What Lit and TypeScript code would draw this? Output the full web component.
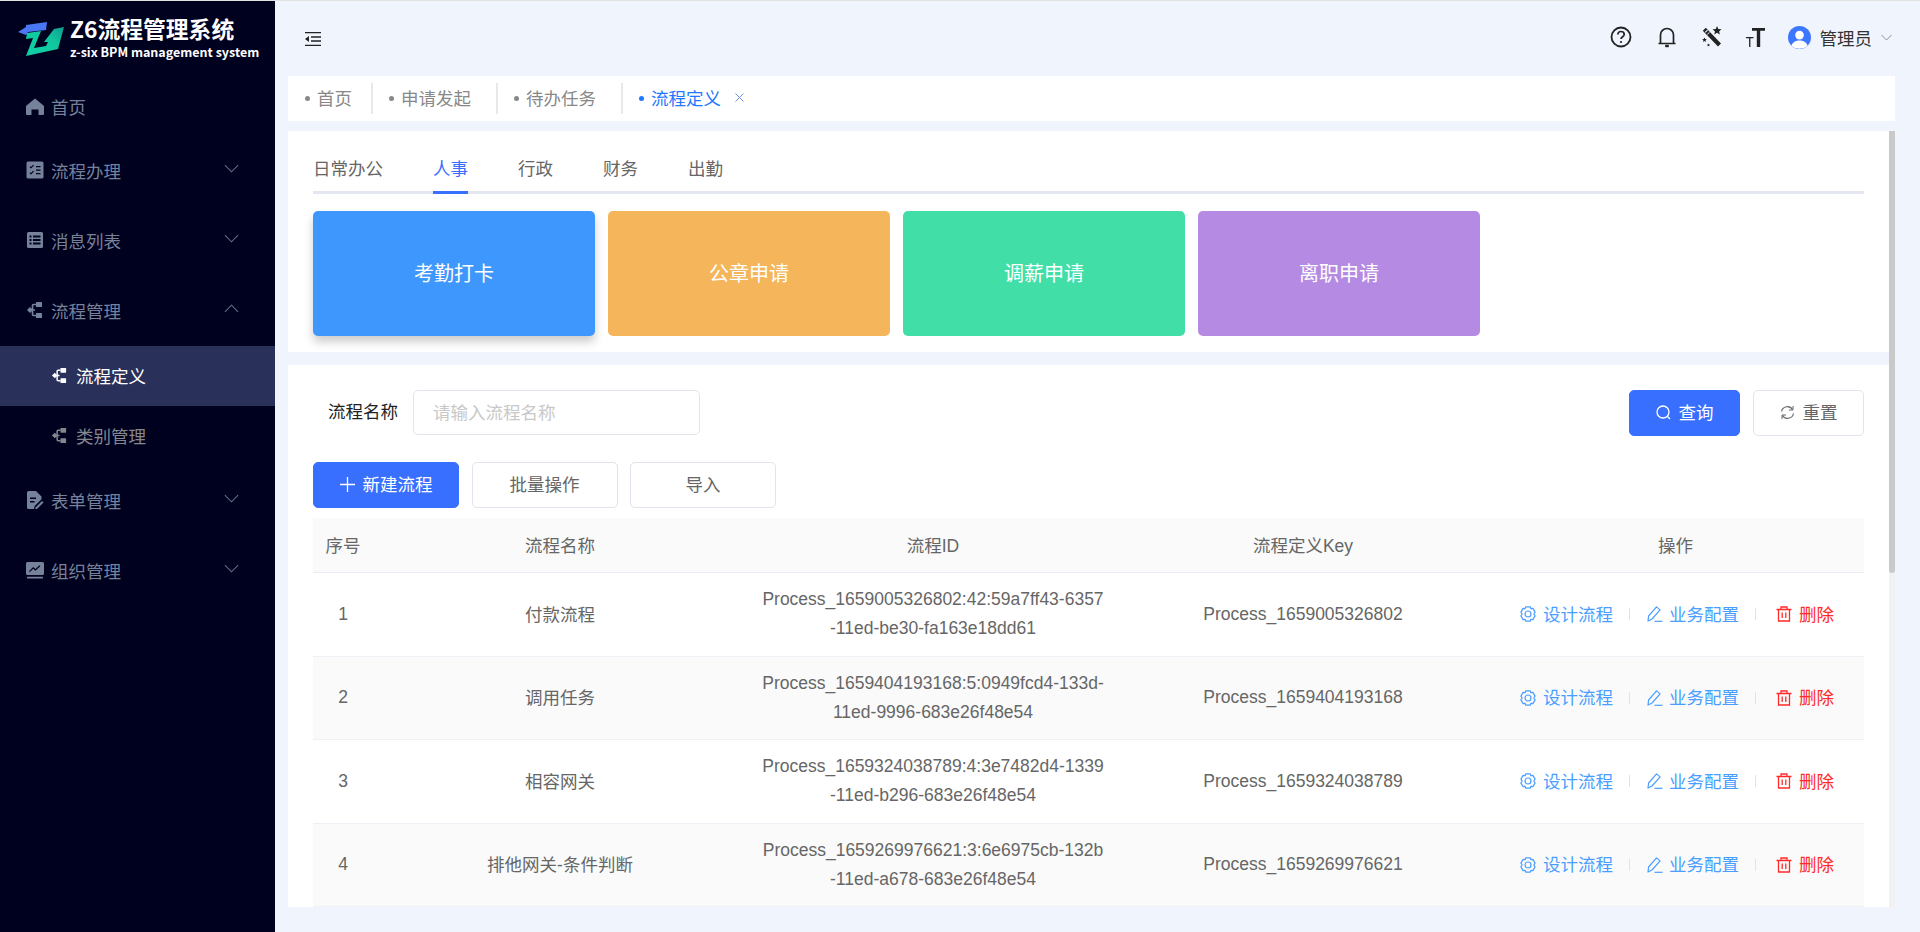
import { LitElement, html, css, svg } from 'lit';
import { customElement } from 'lit/decorators.js';

const flowIcon = svg`<path d="M1 9l3-3 3 3-3 3z"/><path d="M6 9h3M10 3.500h-2.500a1 1 0 0 0-1 1v9a1 1 0 0 0 1 1h2.500" fill="none" stroke="currentColor" stroke-width="1.600"/><rect x="10" y="1" width="6" height="5" rx=".6"/><rect x="10" y="12" width="6" height="5" rx=".6"/>`;

const sideIcons: Record<string, unknown> = {
  home: svg`<path d="M9 1.500 17.500 8.500c.4.4.5.8.5 1.200V17a1 1 0 0 1-1 1h-4.500v-5.500h-7V18H1a1 1 0 0 1-1-1V9.700c0-.4.1-.8.500-1.200z"/>`,
  todo: svg`<path fill-rule="evenodd" d="M2 .5h14A1.500 1.500 0 0 1 17.500 2v14a1.500 1.500 0 0 1-1.500 1.500H2A1.500 1.500 0 0 1 .5 16V2A1.500 1.500 0 0 1 2 .5zM3.500 6l1.500 1.500L8 4.500l-.8-.8L5 5.900l-.7-.7zm0 6 1.500 1.500 3-3-.8-.8L5 11.900l-.7-.7zM10 5v1.300h4.500V5zm0 3.500v1.300h4.500V8.500zm0 3.500v1.300h4.500V12z"/>`,
  msg: svg`<path fill-rule="evenodd" d="M2.500 1h13A1.500 1.500 0 0 1 17 2.500v13a1.500 1.500 0 0 1-1.500 1.500h-13A1.500 1.500 0 0 1 1 15.500v-13A1.500 1.500 0 0 1 2.500 1zM3.500 4.500v2h2v-2zm3.500 0v2h7.500v-2zM3.500 8v2h2V8zM7 8v2h7.500V8zm-3.500 3.500v2h2v-2zm3.500 0v2h7.500v-2z"/>`,
  flow: flowIcon,
  form: svg`<path fill-rule="evenodd" d="M2.500 0H10l5.500 5.500v2.800l-6.800 6.800-.7 2.900H2.500A1.500 1.500 0 0 1 1 16.500v-15A1.500 1.500 0 0 1 2.500 0zM4 6.500v1.500h6V6.500zm0 3.500v1.500h4.500V10z"/><path d="M16 10l1.500 1.500-6.500 6.500H9.500v-1.500z"/>`,
  org: svg`<path fill-rule="evenodd" d="M1.500 1h15A1.500 1.500 0 0 1 18 2.500v10a1.500 1.500 0 0 1-1.500 1.500h-15A1.500 1.500 0 0 1 0 12.500v-10A1.500 1.500 0 0 1 1.500 1zM3 10.200l.9.900 3.300-3.300 2.300 2 4.800-4.600-.9-.9-3.900 3.700-2.300-2z"/><rect x="1" y="15.800" width="16" height="1.600" rx=".5"/>`,
};

const chevron = (up = false) => html`<svg class="chev" viewBox="0 0 16 9" fill="none" stroke="currentColor" stroke-width="1.100"><path d="${up ? 'M1 8 8 1l7 7' : 'M1 1l7 7 7-7'}"/></svg>`;

const gearIcon = html`<svg class="op-ic" viewBox="0 0 16 16" fill="none" stroke="currentColor" stroke-width="1.200"><path d="M5.800.8h4.400l.7 1.900 2-.3 2.200 3.700-1.300 1.900 1.300 1.900-2.200 3.700-2-.3-.7 1.900H5.800l-.7-1.900-2 .3L.9 9.900 2.200 8 .9 6.100l2.200-3.700 2 .3z" stroke-linejoin="round"/><circle cx="8" cy="8" r="3"/></svg>`;
const penIcon = html`<svg class="op-ic pen" viewBox="0 0 16 16" fill="none" stroke="currentColor" stroke-width="1.200"><path d="M1 15 1.600 10 9.500.9l3.600 3L5 13z" stroke-linejoin="round"/><path d="M7.500 15.300h8"/></svg>`;
const trashIcon = html`<svg class="op-ic" viewBox="0 0 16 16" fill="none" stroke="currentColor" stroke-width="1.300"><path d="M.5 3.500h15M5 3.500V1h6v2.500M2.500 3.500V15h11V3.500M6.200 6.500v5.500M9.800 6.500v5.500"/></svg>`;

const menu = [
  { key: 'home', label: '首页', cls: 'first' },
  { key: 'todo', label: '流程办理', arrow: 'down' },
  { key: 'msg', label: '消息列表', arrow: 'down' },
  { key: 'flow', label: '流程管理', arrow: 'up' },
];
const menuAfter = [
  { key: 'form', label: '表单管理', arrow: 'down' },
  { key: 'org', label: '组织管理', arrow: 'down' },
];

const tabs = ['首页', '申请发起', '待办任务'];
const categories = ['日常办公', '人事', '行政', '财务', '出勤'];
const shortcuts = [
  { label: '考勤打卡', cls: 'blue' },
  { label: '公章申请', cls: 'orange' },
  { label: '调薪申请', cls: 'green' },
  { label: '离职申请', cls: 'purple' },
];
const rows = [
  { name: '付款流程', id: ['Process_1659005326802:42:59a7ff43-6357', '-11ed-be30-fa163e18dd61'], key: 'Process_1659005326802' },
  { name: '调用任务', id: ['Process_1659404193168:5:0949fcd4-133d-', '11ed-9996-683e26f48e54'], key: 'Process_1659404193168' },
  { name: '相容网关', id: ['Process_1659324038789:4:3e7482d4-1339', '-11ed-b296-683e26f48e54'], key: 'Process_1659324038789' },
  { name: '排他网关-条件判断', id: ['Process_1659269976621:3:6e6975cb-132b', '-11ed-a678-683e26f48e54'], key: 'Process_1659269976621' },
];

@customElement('app-root')
export class AppRoot extends LitElement {
  static styles = css`
    :host {
      display: block;
      font-family: "Liberation Sans", "Noto Sans CJK SC", sans-serif;
      font-size: 17.5px;
      color: #666;
    }
    * { box-sizing: border-box; }
    .app {
      display: flex;
      height: 932px;
      border-top: 1px solid #e2e2e2;
      background: #f0f5fd;
      overflow: hidden;
    }

    /* sidebar */
    .side {
      width: 275px;
      flex: none;
      background: #00001f;
      color: #75829a;
    }
    .logo {
      height: 73px;
      display: flex;
      align-items: center;
      padding-left: 18px;
      gap: 6px;
    }
    .logo svg { width: 46px; height: 36px; flex: none; margin-top: 3px; }
    .logo-text {
      color: #fff;
      font-weight: 700;
      font-family: "Noto Sans CJK SC", sans-serif;
      margin-top: 3px;
    }
    .logo-title { font-size: 22.800px; line-height: 27px; margin-top: -3px; }
    .logo-sub { font-size: 12.500px; line-height: 16px; white-space: nowrap; margin-top: 2px; }
    .item {
      height: 70px;
      display: flex;
      align-items: center;
      padding: 0 0 2px 26px;
    }
    .item.first { height: 62px; padding: 2px 0 0 26px; }
    .item svg.ic { width: 18px; height: 18px; margin-right: 7px; fill: currentColor; flex: none; }
    .chev { width: 15px; height: 9px; color: #647189; margin-left: auto; margin-right: 36px; margin-top: -4px; }
    .sub {
      height: 60px;
      display: flex;
      align-items: center;
      padding: 0 0 2px 51px;
      color: #85878e;
    }
    .sub svg { width: 17px; height: 17px; margin-right: 8px; fill: currentColor; }
    .sub.active { background: #29305a; color: #fff; }

    /* main */
    .main { flex: 1; min-width: 0; display: flex; flex-direction: column; padding: 0 25px 25px 13px; }
    .topbar {
      height: 75px;
      display: flex;
      align-items: center;
      padding-left: 17px;
      color: #222;
    }
    .topbar .collapse { width: 16px; height: 14px; margin-top: 1px; }
    .tools { margin-left: auto; display: flex; align-items: center; margin-top: -3px; }
    .tools svg { display: block; }
    .tool-help { width: 22px; height: 22px; margin-right: 24px; }
    .tool-bell { width: 22px; height: 22px; margin-right: 23px; }
    .tool-wand { width: 22px; height: 22px; margin-right: 23px; }
    .tool-font { width: 19px; height: 19px; margin-right: 23px; }
    .avatar { width: 23px; height: 23px; margin-right: 9px; }
    .user { color: #333; }
    .user-chev { width: 11px; height: 7px; color: #8a8f99; margin-left: 9px; }
    .user-wrap { display: flex; align-items: center; margin-right: 3px; }

    .tabbar {
      height: 45px;
      background: #fff;
      display: flex;
      align-items: center;
      margin-bottom: 10px;
      padding-left: 1px;
      flex: none;
    }
    .tab {
      display: flex;
      align-items: center;
      height: 31px;
      padding: 0 25px 2px 16px;
      border-right: 2px solid #e8e8e8;
      color: #888;
    }
    .tab:first-child { padding-right: 19px; }
    .tab .dot { width: 5px; height: 5px; border-radius: 50%; background: #888; margin-right: 7px; margin-top: 2px; }
    .tab.active { border-right: 0; color: #1f78ff; }
    .tab.active .dot { background: #1f78ff; }
    .tab .close { width: 11px; height: 11px; margin-left: 13px; color: #6d8fe0; }

    .scroll-wrap { flex: 1; min-height: 0; display: flex; }
    .scroller { flex: 1; min-width: 0; overflow: hidden; }
    .bar { width: 6px; flex: none; background: #f1f1f1; }
    .thumb { height: 442px; background: #c9c9c9; border-radius: 0 0 3px 3px; }
    .card { background: #fff; }
    .card-cats { height: 221px; padding: 22px 25px 0 25px; margin-bottom: 13px; }
    .cats {
      display: flex;
      gap: 50px;
      height: 41px;
      border-bottom: 3px solid #e4e7ef;
    }
    .cat { height: 41px; line-height: 32px; color: #666; }
    .cat.active { color: #3a6fff; border-bottom: 3px solid #386fff; }
    .shortcuts { display: flex; gap: 13px; margin-top: 17px; }
    .shortcut {
      width: 282px;
      height: 125px;
      border-radius: 5px;
      display: flex;
      align-items: center;
      justify-content: center;
      color: #fff;
      font-size: 20px;
      padding-bottom: 2px;
    }
    .blue { background: #3e97fc; box-shadow: 0 6px 10px rgba(0, 0, 0, .2); }
    .orange { background: #f5b65b; }
    .green { background: #41dfa7; }
    .purple { background: #b48ae3; }

    .card-list { padding: 25px 25px 25px 25px; }
    .search { display: flex; align-items: flex-start; height: 46px; padding-left: 15px; }
    .search label { color: #222; margin-right: 15px; line-height: 44px; }
    .input {
      width: 287px;
      height: 45px;
      border: 1.500px solid #e2e3ec;
      border-radius: 5px;
      padding: 0 0 3px 19px;
      display: flex;
      align-items: center;
      color: #c8c8c8;
    }
    .btn {
      height: 46px;
      border-radius: 5px;
      display: flex;
      align-items: center;
      justify-content: center;
      border: 1.500px solid #e2e3ec;
      background: #fff;
      color: #666;
      padding-bottom: 3px;
    }
    .btn.primary { background: #386fff; border-color: #386fff; color: #fff; }
    .btn svg { margin-right: 8px; flex: none; margin-top: 2px; }
    .search-btns { margin-left: auto; display: flex; gap: 13px; }
    .search-btns .btn { width: 111px; }
    .search-btns svg { width: 15px; height: 15px; }
    .toolbar { display: flex; gap: 12.5px; margin-top: 26px; margin-bottom: 10px; }
    .toolbar .btn { width: 146px; }
    .toolbar svg { width: 15px; height: 15px; }

    .row {
      display: grid;
      grid-template-columns: 60px 374px 372px 368px 377px;
      align-items: center;
      text-align: center;
      height: 83.500px;
      border-bottom: 1.500px solid #eef0f6;
    }
    .row.head { height: 55px; background: #fafafa; border-bottom-color: #e9ecf4; padding-bottom: 2px; }
    .row.odd { background: #fafafa; }
    .cjk { padding-bottom: 2px; }
    .idline { line-height: 29px; }
    .ops { display: flex; align-items: center; padding: 0 0 2px 33px; }
    .op { display: flex; align-items: center; color: #4a9eff; }
    .op.del { color: #ff2a2a; margin-left: 2px; }
    .op-ic { width: 16px; height: 16px; margin-right: 7px; margin-top: 2px; }
    .op-ic.pen { margin-left: -1px; margin-right: 6px; }
    .sep { width: 1px; height: 12px; background: #e3e3e3; margin: 2px 18px 0 16px; }
  `;

  render() {
    return html`
      <div class="app">
        <aside class="side">
          <div class="logo">
            <svg viewBox="0 0 46 36">
              <defs>
                <linearGradient id="lg" x1="0" y1="1" x2="1" y2="0">
                  <stop offset="0" stop-color="#10d0a5"/><stop offset=".6" stop-color="#10c8a0"/><stop offset="1" stop-color="#0d9d8c"/>
                </linearGradient>
              </defs>
              <path d="M0 11 8 6V4L29 1l-1 8L10 11l-2 3z" fill="#4a78f5"/>
              <path fill="url(#lg)" d="M9 12 23 10 16 27 28 25 30 21 26 21 36 8 46 6 40 28 8 35 15 17 8 18z"/>
            </svg>
            <div class="logo-text">
              <div class="logo-title">Z6流程管理系统</div>
              <div class="logo-sub">z-six BPM management system</div>
            </div>
          </div>
          ${menu.map(m => html`
            <div class="item ${m.cls ?? ''}">
              <svg class="ic" viewBox="0 0 18 18">${sideIcons[m.key]}</svg>
              <span>${m.label}</span>
              ${m.arrow ? chevron(m.arrow === 'up') : ''}
            </div>`)}
          <div class="sub active"><svg viewBox="0 0 18 18">${flowIcon}</svg><span>流程定义</span></div>
          <div class="sub"><svg viewBox="0 0 18 18">${flowIcon}</svg><span>类别管理</span></div>
          ${menuAfter.map(m => html`
            <div class="item">
              <svg class="ic" viewBox="0 0 18 18">${sideIcons[m.key]}</svg>
              <span>${m.label}</span>
              ${chevron()}
            </div>`)}
        </aside>

        <div class="main">
          <header class="topbar">
            <svg class="collapse" viewBox="0 0 16 14" fill="none" stroke="currentColor" stroke-width="1.300"><path d="M0 .7h16M6 5h10M6 9h10M0 13.300h16"/><path d="M4 4 0 7l4 3z" fill="currentColor" stroke="none"/></svg>
            <div class="tools">
              <svg class="tool-help" viewBox="0 0 22 22" fill="none" stroke="currentColor" stroke-width="1.800"><circle cx="11" cy="11" r="9.500"/><path d="M7.800 8.500c0-1.800 1.400-3 3.200-3s3.200 1.200 3.200 2.900c0 2.300-3.200 2.400-3.200 4.700" stroke-width="1.700"/><circle cx="11" cy="16" r="1.100" fill="currentColor" stroke="none"/></svg>
              <svg class="tool-bell" viewBox="0 0 22 22" fill="none" stroke="currentColor" stroke-width="1.700"><path d="M2.500 17.500h17M4.500 17.500V9a6.500 6.500 0 0 1 13 0v8.500" stroke-linejoin="round"/><path d="M9.200 20h3.600" stroke-width="2.400"/></svg>
              <svg class="tool-wand" viewBox="0 0 22 22" fill="currentColor"><path d="M1.800 4.800 4.800 1.800 20 17.500 17 20.500z"/><path d="M3.900 6 6.100 3.800l.8.8-2.200 2.200zM6 8.200l2.200-2.200.5.500-2.200 2.200z" fill="#f0f5fd"/><path d="M16 0l1.300 3 3.200.3-2.400 2.100.8 3.100-2.900-1.700-2.700 1.700.7-3.100-2.400-2.100 3.200-.3zM3.500 11.500l.7 1.500 1.700.2-1.300 1.100.4 1.700-1.500-.9-1.500.9.400-1.700-1.300-1.100 1.700-.2zM7.500 17.500l.5 1 1.100.1-.8.700.2 1.100-1-.6-1 .6.2-1.100-.8-.7 1.100-.1z"/></svg>
              <svg class="tool-font" viewBox="0 0 19 19" fill="currentColor"><path d="M6 0h13v2.800h-4.800V19h-3.400V2.800H6z"/><path d="M0 9h7.500v1.300H4.400V19H3.100v-8.700H0z"/></svg>
              <div class="user-wrap">
                <svg class="avatar" viewBox="0 0 24 24"><circle cx="12" cy="12" r="12" fill="#3e77ff"/><circle cx="12" cy="9.500" r="4.500" fill="#fff"/><path d="M3.500 20.500c1.500-4 4.500-5.500 8.500-5.500s7 1.500 8.500 5.500c-2 2-5 3.200-8.500 3.200s-6.500-1.200-8.500-3.200z" fill="#fff"/></svg>
                <span class="user">管理员</span>
                <svg class="user-chev" viewBox="0 0 11 7" fill="none" stroke="currentColor" stroke-width="1"><path d="M.5 1l5 5 5-5"/></svg>
              </div>
            </div>
          </header>

          <nav class="tabbar">
            ${tabs.map(t => html`<div class="tab"><i class="dot"></i>${t}</div>`)}
            <div class="tab active">
              <i class="dot"></i>流程定义
              <svg class="close" viewBox="0 0 11 11" stroke="currentColor" stroke-width="1"><path d="M1.500 1.500l8 8M9.500 1.500l-8 8"/></svg>
            </div>
          </nav>

          <div class="scroll-wrap">
            <div class="scroller">
              <section class="card card-cats">
                <div class="cats">
                  ${categories.map((c, i) => html`<div class="cat ${i === 1 ? 'active' : ''}">${c}</div>`)}
                </div>
                <div class="shortcuts">
                  ${shortcuts.map(s => html`<div class="shortcut ${s.cls}">${s.label}</div>`)}
                </div>
              </section>

              <section class="card card-list">
                <div class="search">
                  <label>流程名称</label>
                  <div class="input">请输入流程名称</div>
                  <div class="search-btns">
                    <div class="btn primary">
                      <svg viewBox="0 0 15 15" fill="none" stroke="currentColor" stroke-width="1.300"><circle cx="7" cy="7" r="6"/><path d="M11.500 11.500 14 14"/></svg>查询
                    </div>
                    <div class="btn">
                      <svg viewBox="0 0 15 15" fill="none" stroke="currentColor" stroke-width="1.200"><path d="M1.500 6.500A6 6 0 0 1 12.500 4.500M13.500 8.500A6 6 0 0 1 2.500 10.500"/><path d="M13 1v4H9M2 14v-4h4" stroke-width="1"/></svg>重置
                    </div>
                  </div>
                </div>
                <div class="toolbar">
                  <div class="btn primary">
                    <svg viewBox="0 0 15 15" stroke="currentColor" stroke-width="1.300"><path d="M7.500 0v15M0 7.500h15"/></svg>新建流程
                  </div>
                  <div class="btn">批量操作</div>
                  <div class="btn">导入</div>
                </div>

                <div class="row head">
                  <div>序号</div><div>流程名称</div><div>流程ID</div><div>流程定义Key</div><div>操作</div>
                </div>
                ${rows.map((r, i) => html`
                  <div class="row ${i % 2 ? 'odd' : ''}">
                    <div>${i + 1}</div>
                    <div class="cjk">${r.name}</div>
                    <div>${r.id.map(l => html`<div class="idline">${l}</div>`)}</div>
                    <div>${r.key}</div>
                    <div class="ops">
                      <span class="op">${gearIcon}设计流程</span>
                      <i class="sep"></i>
                      <span class="op">${penIcon}业务配置</span>
                      <i class="sep"></i>
                      <span class="op del">${trashIcon}删除</span>
                    </div>
                  </div>`)}
              </section>
            </div>
            <div class="bar"><div class="thumb"></div></div>
          </div>
        </div>
      </div>
    `;
  }
}
